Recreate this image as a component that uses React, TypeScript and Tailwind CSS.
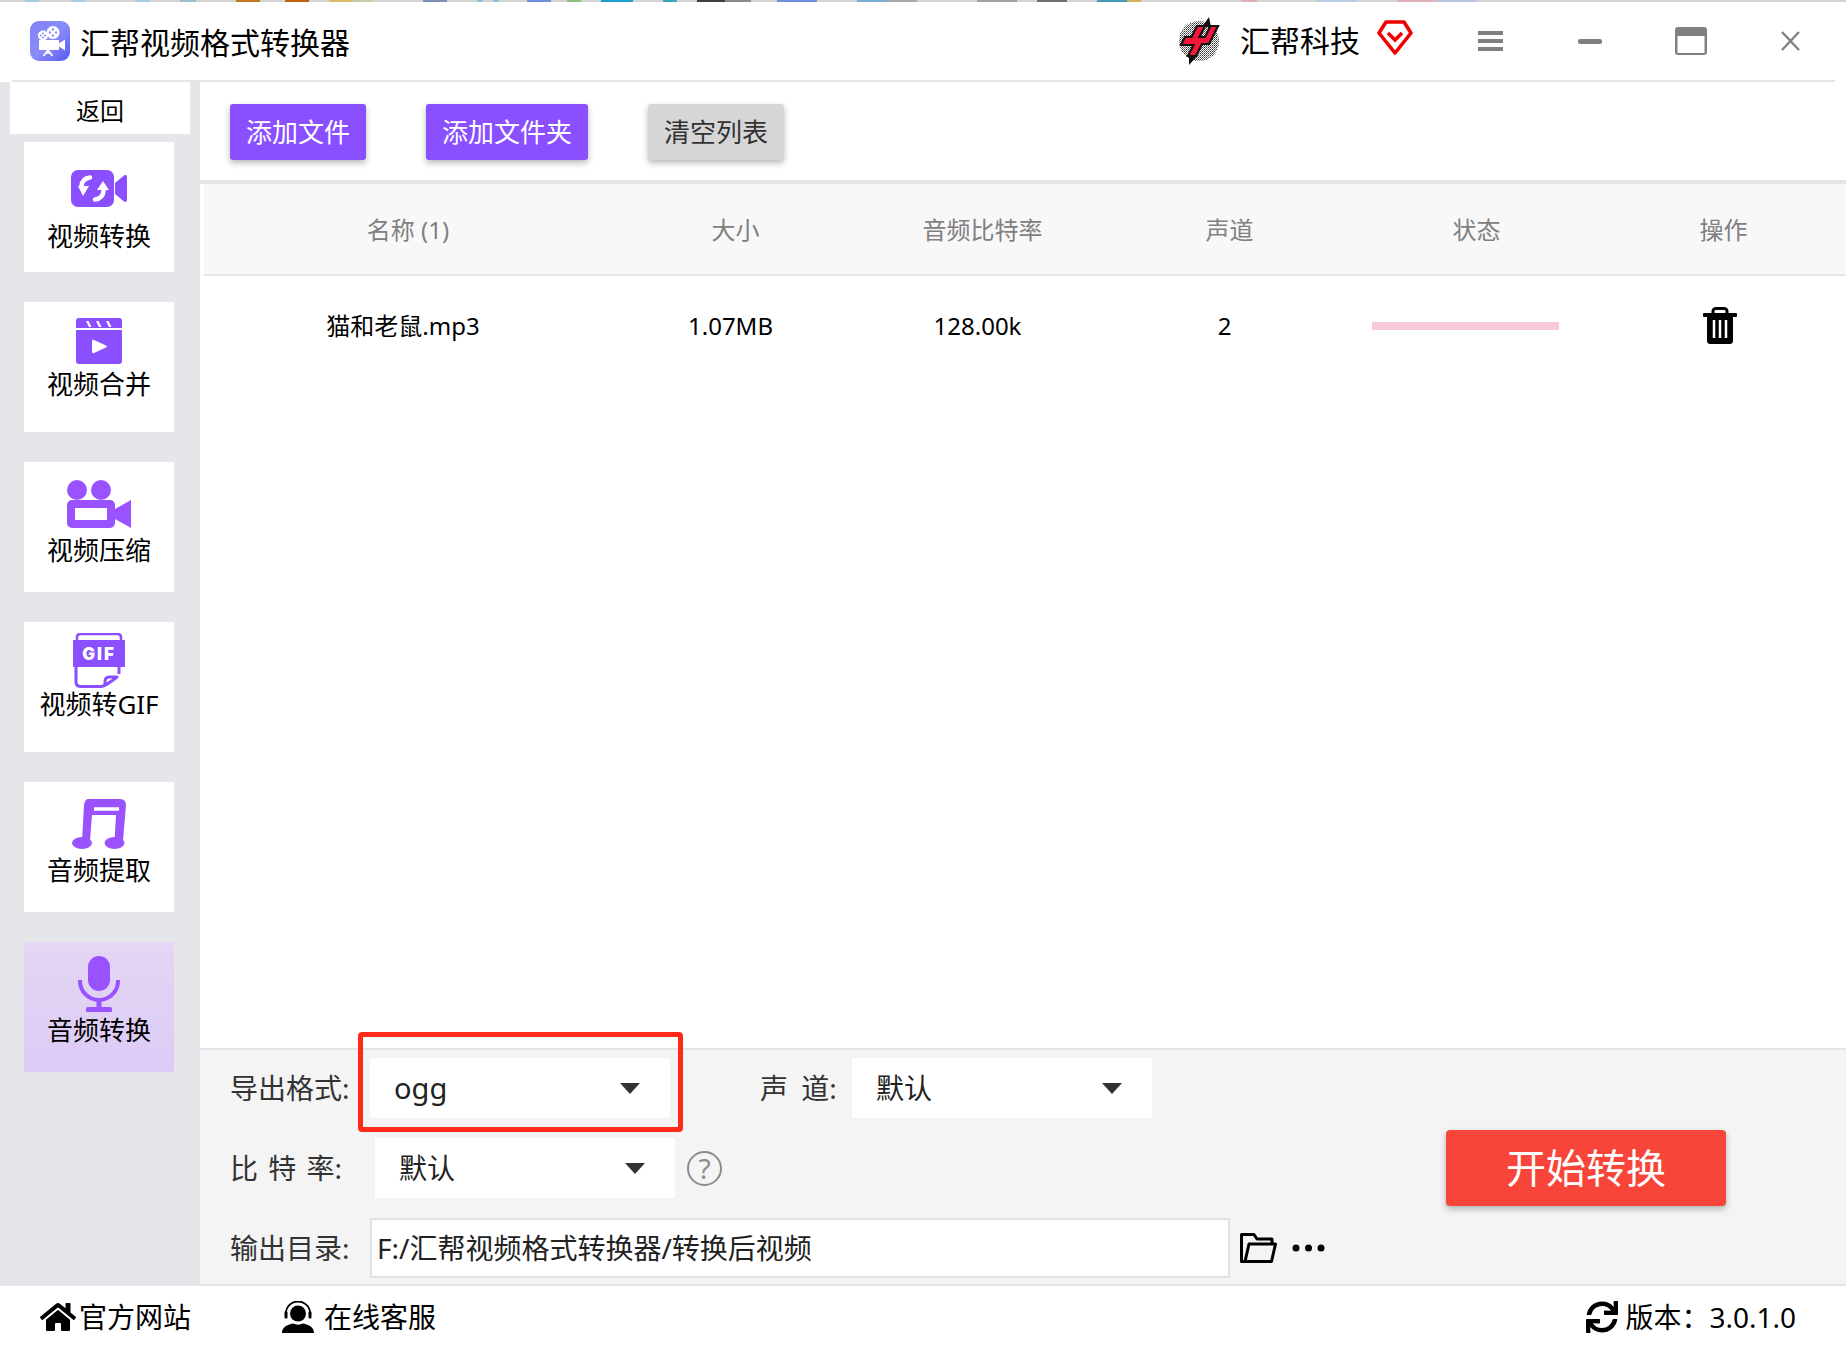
import { FaHome, FaSync } from 'react-icons/fa';

const FONT = "font-['Noto_Sans','Noto_Sans_CJK_SC',sans-serif]";

// desktop showing through the top edge of the window
const strip: [string, string][] = [
  ['w-[25px]', 'bg-[#d4d4d4]'], ['w-[14px]', 'bg-[#a8cbe0]'], ['w-[32px]', 'bg-[#d4d4d4]'], ['w-[14px]', 'bg-[#a8cbe0]'],
  ['w-[50px]', 'bg-[#d4d4d4]'], ['w-[15px]', 'bg-[#a8cbe0]'], ['w-[30px]', 'bg-[#d4d4d4]'], ['w-[16px]', 'bg-[#9dbdd0]'],
  ['w-[40px]', 'bg-[#d4d4d4]'], ['w-[24px]', 'bg-[#c27a20]'], ['w-[25px]', 'bg-[#d4d4d4]'], ['w-[24px]', 'bg-[#c4600c]'],
  ['w-[20px]', 'bg-[#d4d4d4]'], ['w-[24px]', 'bg-[#dcbb68]'], ['w-[20px]', 'bg-[#c9cca8]'], ['w-[50px]', 'bg-[#d4d4d4]'],
  ['w-[24px]', 'bg-[#7d8fb5]'], ['w-[30px]', 'bg-[#d4d4d4]'], ['w-[6px]', 'bg-[#8fc0d8]'], ['w-[10px]', 'bg-[#d4d4d4]'],
  ['w-[6px]', 'bg-[#8fc0d8]'], ['w-[28px]', 'bg-[#d4d4d4]'], ['w-[24px]', 'bg-[#6f90dc]'], ['w-[16px]', 'bg-[#d4d4d4]'],
  ['w-[14px]', 'bg-[#8ebc7c]'], ['w-[20px]', 'bg-[#d4d4d4]'], ['w-[32px]', 'bg-[#20a0d0]'], ['w-[30px]', 'bg-[#d4d4d4]'],
  ['w-[14px]', 'bg-[#38a8c0]'], ['w-[20px]', 'bg-[#d4d4d4]'], ['w-[28px]', 'bg-[#404040]'], ['w-[26px]', 'bg-[#8a8a8a]'],
  ['w-[26px]', 'bg-[#d4d4d4]'], ['w-[40px]', 'bg-[#6f90dc]'], ['w-[40px]', 'bg-[#d4d4d4]'], ['w-[30px]', 'bg-[#7ab0d8]'],
  ['w-[30px]', 'bg-[#a8a8a8]'], ['w-[60px]', 'bg-[#d4d4d4]'], ['w-[40px]', 'bg-[#a0a0a0]'], ['w-[20px]', 'bg-[#d4d4d4]'],
  ['w-[30px]', 'bg-[#707070]'], ['w-[30px]', 'bg-[#d4d4d4]'], ['w-[30px]', 'bg-[#4898b8]'], ['w-[14px]', 'bg-[#d4b060]'],
  ['w-[100px]', 'bg-[#d4d4d4]'], ['w-[16px]', 'bg-[#e0b0b0]'], ['w-[60px]', 'bg-[#d4d4d4]'], ['w-[40px]', 'bg-[#b8cce4]'],
  ['w-[40px]', 'bg-[#d4d4d4]'], ['w-[40px]', 'bg-[#e0b0b8]'], ['w-[40px]', 'bg-[#b8c4e0]'], ['flex-1', 'bg-[#d4d4d4]'],
];

const AppLogo = () => (
  <svg width="40" height="40" viewBox="0 0 40 40">
    <defs>
      <linearGradient id="lg" x1="0" y1="0" x2="1" y2="1">
        <stop offset="0" stopColor="#7f82f8" />
        <stop offset="0.5" stopColor="#8b8cfa" />
        <stop offset="1" stopColor="#5458f0" />
      </linearGradient>
    </defs>
    <rect width="40" height="40" rx="9" fill="url(#lg)" />
    <circle cx="13" cy="14.5" r="5" fill="#fff" />
    <circle cx="23" cy="11.5" r="6.5" fill="#fff" />
    <g fill="#8b8cfa">
      <circle cx="23" cy="8.5" r="1.2" /><circle cx="20" cy="11.5" r="1.2" /><circle cx="26" cy="11.5" r="1.2" /><circle cx="23" cy="14.5" r="1.2" />
      <circle cx="13" cy="12.5" r="1" /><circle cx="10.8" cy="14.5" r="1" /><circle cx="15.2" cy="14.5" r="1" /><circle cx="13" cy="16.5" r="1" />
    </g>
    <rect x="9" y="19" width="20" height="10" rx="1" fill="#fff" />
    <path d="M29 22.5 35 18.5V29.5L29 25.5Z" fill="#fff" />
    <path d="M18 29 13.5 35M18 29 22.5 35M18 29V33" stroke="#fff" strokeWidth="1.8" fill="none" />
  </svg>
);

const BrandLogo = () => (
  <svg width="42" height="48" viewBox="0 0 42 48">
    <defs>
      <pattern id="dots" width="2" height="2" patternUnits="userSpaceOnUse">
        <rect width="1" height="1" fill="#333" />
        <rect x="1" y="1" width="1" height="1" fill="#777" />
      </pattern>
    </defs>
    <circle cx="21" cy="24" r="20" fill="url(#dots)" />
    <path d="M24 10 31 0 33 10ZM11 38 11 48 20 38Z" fill="#111" />
    <path
      d="M19 9H27L21.500 20H27L32.500 9H40L31 27H24L18 39H10L15.500 28H3L7 20H13.500Z"
      fill="#f5163a"
      stroke="#111"
      strokeWidth="2.2"
    />
  </svg>
);

const BadgeIcon = () => (
  <svg width="36" height="35" viewBox="0 0 36 35" fill="none">
    <path d="M9 2H27L34 13 18 33 2 13Z" stroke="#f00000" strokeWidth="3.6" strokeLinejoin="round" />
    <path d="M11 13 18 20 25 13" stroke="#f00000" strokeWidth="3.6" />
  </svg>
);

const TitleButtons = () => (
  <div className="flex items-center">
    <svg className="ml-[65px]" width="25" height="20" viewBox="0 0 25 20" fill="#808080">
      <rect width="25" height="4" /><rect y="8" width="25" height="4" /><rect y="16" width="25" height="4" />
    </svg>
    <svg className="ml-[75px]" width="24" height="5" viewBox="0 0 24 5" fill="#808080">
      <rect width="24" height="5" rx="2" />
    </svg>
    <svg className="ml-[73px]" width="32" height="28" viewBox="0 0 32 28">
      <rect width="32" height="28" rx="3" fill="#808080" />
      <rect x="2.5" y="9" width="27" height="17" fill="#fff" />
    </svg>
    <svg className="ml-[74px]" width="19" height="20" viewBox="0 0 19 20" stroke="#808080" strokeWidth="2.4">
      <path d="M1 1 18 19M18 1 1 19" />
    </svg>
  </div>
);

const ConvertIcon = () => (
  <svg width="56" height="37" viewBox="0 0 56 37">
    <rect width="43" height="37" rx="7" fill="#8a4fff" />
    <path d="M44 13 53 5.5C54.5 4.5 56 5 56 7V30C56 32 54.5 32.5 53 31.500L44 24Z" fill="#8a4fff" />
    <path d="M19 7.500C14 8 11 11 10.500 16" stroke="#fff" strokeWidth="4.500" fill="none" strokeLinecap="round" />
    <path d="M7 16H18L12 26Z" fill="#fff" />
    <path d="M24 29.500C29 29 32.500 25.500 32.500 20" stroke="#fff" strokeWidth="4.500" fill="none" strokeLinecap="round" />
    <path d="M26 20H38L32 11Z" fill="#fff" />
  </svg>
);

const MergeIcon = () => (
  <svg width="46" height="46" viewBox="0 0 46 46" fill="#8a4fff">
    <path d="M3 0H43A3 3 0 0 1 46 3V10H0V3A3 3 0 0 1 3 0Z" />
    <path d="M0 12H46V43A3 3 0 0 1 43 46H3A3 3 0 0 1 0 43Z" />
    <path d="M10 3 13 9H15.500L12.500 3ZM20 3 23 9H25.500L22.500 3ZM30 3 33 9H35.500L32.500 3Z" fill="#fff" />
    <path d="M16 23C16 22 17 21.500 18 22L30 27.500C31 28 31 29 30 29.500L18 35C17 35.500 16 35 16 34Z" fill="#fff" />
  </svg>
);

const CompressIcon = () => (
  <svg width="64" height="48" viewBox="0 0 64 48" fill="#9a52ff">
    <circle cx="10" cy="10" r="10" />
    <circle cx="34" cy="10" r="10" />
    <path d="M5 20H43A5 5 0 0 1 48 25V43A5 5 0 0 1 43 48H5A5 5 0 0 1 0 43V25A5 5 0 0 1 5 20ZM8 28V40H40V28Z" fillRule="evenodd" />
    <path d="M48 29 64 20V48L48 39Z" />
  </svg>
);

const GifIcon = () => (
  <svg className="-mb-[2px]" width="52" height="55" viewBox="0 0 52 55" fill="none">
    <path d="M4 9V4C4 2 6 1 8 1H44C46 1 48 2 48 4V9" stroke="#8a4fff" strokeWidth="2.500" />
    <rect y="7" width="52" height="27" rx="1" fill="#8a4fff" />
    <path d="M3 33V49C3 52 5 53.500 8 53.500H28C32 53.500 44 44 44 44H36C33 44 32 46 32 49V53" stroke="#8a4fff" strokeWidth="3" strokeLinejoin="round" />
    <path d="M46 34V41" stroke="#8a4fff" strokeWidth="3" />
    <text x="26" y="27" textAnchor="middle" fill="#fff" fontSize="17" fontWeight="900" fontFamily="Inter,sans-serif" letterSpacing="2">GIF</text>
  </svg>
);

const MusicIcon = () => (
  <svg width="54" height="50" viewBox="0 0 54 50" fill="#9a52ff">
    <path d="M16 0H48Q54 0 54 6L51 42H42.500L44 16H20L18 42H10L12 6Q13 0 16 0ZM22 8.300V11.700H47V8.300Z" fillRule="evenodd" />
    <ellipse cx="10" cy="44" rx="10" ry="6" />
    <ellipse cx="42.500" cy="44" rx="10" ry="6" />
  </svg>
);

const MicIcon = () => (
  <svg width="42" height="56" viewBox="0 0 42 56" fill="none">
    <rect x="10" width="22" height="35" rx="11" fill="#9a52ff" />
    <path d="M2 24V25A19 19 0 0 0 40 25V24" stroke="#9a52ff" strokeWidth="4" />
    <rect x="18.500" y="44" width="5" height="9" fill="#9a52ff" />
    <rect x="8" y="51" width="26" height="5" rx="1.500" fill="#9a52ff" />
  </svg>
);

const TrashIcon = () => (
  <svg width="36" height="38" viewBox="0 0 36 38" fill="none">
    <path d="M11 6V4C11 2.500 12.500 1.500 14 1.500H22C23.500 1.500 25 2.500 25 4V6" stroke="#000" strokeWidth="3" />
    <rect x="1" y="6" width="34" height="4" rx="1" fill="#000" />
    <path d="M5 10H31V34C31 36 29.500 37 28 37H8C6.500 37 5 36 5 34Z" fill="#000" />
    <path d="M12 13V31M18 13V31M24 13V31" stroke="#fff" strokeWidth="2.500" />
  </svg>
);

const Caret = () => (
  <svg width="20" height="11" viewBox="0 0 20 11">
    <path d="M0 0H20L10 11Z" fill="#333" />
  </svg>
);

const HeadsetIcon = () => (
  <svg width="32" height="32" viewBox="0 0 32 32">
    <circle cx="16" cy="12.500" r="8" fill="#000" />
    <path d="M4 14V12A12 11.500 0 0 1 28 12V14" stroke="#000" strokeWidth="1.800" fill="none" />
    <rect x="2.500" y="10.500" width="3" height="7" rx="1" fill="#000" />
    <rect x="26.500" y="10.500" width="3" height="7" rx="1" fill="#000" />
    <path d="M0 32C0 26 5 24 11 22.500 14 24 18 24 21 22.500 27 24 32 26 32 32Z" fill="#000" />
  </svg>
);

const FolderIcon = () => (
  <svg width="37" height="30" viewBox="0 0 37 30" fill="none" stroke="#000" strokeWidth="3" strokeLinejoin="round">
    <path d="M5 28.500H1.500V1.500H14L17 6H32V11" />
    <path d="M9 11H35.500L31.500 28.500H5Z" />
  </svg>
);

const navItems = [
  { label: '视频转换', icon: <ConvertIcon />, box: 'pt-[28px] gap-[11px]' },
  { label: '视频合并', icon: <MergeIcon />, box: 'pt-[16px] gap-[2px]' },
  { label: '视频压缩', icon: <CompressIcon />, box: 'pt-[18px] gap-[4px]' },
  { label: '视频转GIF', icon: <GifIcon />, box: 'pt-[11px] gap-[0px]' },
  { label: '音频提取', icon: <MusicIcon />, box: 'pt-[17px] gap-[3px]' },
  { label: '音频转换', icon: <MicIcon />, box: 'pt-[14px] gap-[0px]', active: true },
];

const columns = ['名称 (1)', '大小', '音频比特率', '声道', '状态', '操作'];

const Select = ({ value, big }: { value: string; big?: boolean }) => (
  <div className="w-[300px] h-[60px] bg-white flex items-center justify-between pl-[24px] pr-[30px]">
    <span className={big ? 'text-[29px] text-[#222]' : 'text-[28px] text-[#222]'}>{value}</span>
    <Caret />
  </div>
);

export default function App() {
  return (
    <div className={`w-full h-screen overflow-hidden flex flex-col bg-white text-black ${FONT}`}>
      <div className="h-[2px] flex shrink-0">
        {strip.map(([w, c], i) => (
          <span key={i} className={`${w} ${c}`} />
        ))}
      </div>

      {/* Title bar */}
      <div className="h-[78px] shrink-0 flex items-center pl-[30px]">
        <AppLogo />
        <span className="ml-[10px] mt-[3px] text-[30px] leading-none">汇帮视频格式转换器</span>
        <div className="ml-auto mr-[46px] flex items-center">
          <BrandLogo />
          <span className="ml-[20px] text-[30px] leading-none">汇帮科技</span>
          <span className="ml-[17px] -mt-[8px]"><BadgeIcon /></span>
          <TitleButtons />
        </div>
      </div>
      <div className="h-[2px] shrink-0 ml-[12px] mr-[11px] bg-[#e5e5e5]" />

      <div className="flex-1 min-h-0 flex">
        {/* Sidebar */}
        <div className="w-[200px] shrink-0 bg-[#e4e6ea] flex flex-col">
          <div className="ml-[10px] w-[180px] h-[52px] shrink-0 pt-[6px] bg-white flex items-center justify-center text-[24px]">返回</div>
          <div className="mt-[8px] ml-[24px] w-[150px] flex flex-col gap-[30px]">
            {navItems.map((item) => (
              <div
                key={item.label}
                className={`h-[130px] flex flex-col items-center ${item.box} ${
                  item.active ? 'bg-gradient-to-b from-[#e4d6f4] to-[#dccbf6]' : 'bg-white'
                }`}
              >
                {item.icon}
                <span className="text-[26px] leading-[36px] whitespace-nowrap">{item.label}</span>
              </div>
            ))}
          </div>
        </div>

        {/* Main */}
        <div className="flex-1 min-w-0 flex flex-col">
          <div className="h-[98px] shrink-0 flex items-start pt-[22px] pl-[30px] text-[26px]">
            <button className="w-[136px] h-[56px] rounded-[3px] bg-[#8a4fff] text-white shadow-[0_3px_6px_rgba(0,0,0,0.28)]">添加文件</button>
            <button className="ml-[60px] w-[162px] h-[56px] rounded-[3px] bg-[#8a4fff] text-white shadow-[0_3px_6px_rgba(0,0,0,0.28)]">添加文件夹</button>
            <button className="ml-[60px] w-[136px] h-[56px] rounded-[3px] bg-[#d6d6d6] text-[#333] shadow-[0_3px_6px_rgba(0,0,0,0.28)]">清空列表</button>
          </div>
          <div className="h-[4px] shrink-0 bg-[#e5e5e5]" />

          {/* Table */}
          <div className="flex-1 min-h-0 pl-[4px]">
            <div className="grid grid-cols-[408px_repeat(5,247px)] h-[92px] pt-[2px] items-center bg-[#f8f8f8] border-b-2 border-[#e5e5e5] text-[24px] text-[#808080] text-center">
              {columns.map((c) => (
                <span key={c}>{c}</span>
              ))}
            </div>
            <div className="grid grid-cols-[408px_repeat(5,247px)] h-[100px] items-center text-[24px] text-center">
              <span className="pr-[10px]">猫和老鼠.mp3</span>
              <span className="pr-[10px]">1.07MB</span>
              <span className="pr-[10px]">128.00k</span>
              <span className="pr-[10px]">2</span>
              <div className="flex justify-start pl-[19px]">
                <div className="w-[187px] h-[8px] bg-[#f9c8da]" />
              </div>
              <div className="flex justify-center pr-[8px]"><TrashIcon /></div>
            </div>
          </div>

          {/* Settings */}
          <div className="h-[238px] shrink-0 bg-[#f4f4f4] border-y-2 border-[#e4e4e8] text-[28px] text-[#333]">
            <div className="mt-[8px] h-[60px] flex items-center pl-[30px]">
              <span className="w-[140px]">导出格式:</span>
              <div className="relative">
                <Select value="ogg" big />
                <div className="absolute -left-[12px] -right-[13px] -top-[26px] -bottom-[14px] rounded-[4px] border-[5px] border-[#ff2a1a]" />
              </div>
              <span className="ml-[90px] w-[92px] [word-spacing:6px]">声 道:</span>
              <Select value="默认" />
            </div>
            <div className="mt-[20px] h-[60px] flex items-center pl-[30px]">
              <span className="w-[145px] [word-spacing:3px]">比 特 率:</span>
              <Select value="默认" />
              <span className="ml-[12px] w-[35px] h-[35px] rounded-full border-2 border-[#8c8c8c] flex items-center justify-center text-[28px] leading-none text-[#8c8c8c]">?</span>
              <button className="ml-auto mr-[120px] -my-[8px] w-[280px] h-[76px] rounded-[4px] bg-[#f7453a] text-white text-[40px] shadow-[0_3px_6px_rgba(0,0,0,0.28)]">开始转换</button>
            </div>
            <div className="mt-[20px] h-[60px] flex items-center pl-[30px]">
              <span className="w-[140px]">输出目录:</span>
              <div className="w-[860px] h-[60px] bg-white border-2 border-[#e0e0e8] flex items-center pl-[5px] text-[28px] text-[#222]">F:/汇帮视频格式转换器/转换后视频</div>
              <span className="ml-[10px]"><FolderIcon /></span>
              <svg className="ml-[15px]" width="33" height="8" viewBox="0 0 33 8" fill="#000">
                <circle cx="4" cy="4" r="3.500" /><circle cx="16.500" cy="4" r="3.500" /><circle cx="29" cy="4" r="3.500" />
              </svg>
            </div>
          </div>
        </div>
      </div>

      {/* Footer */}
      <div className="h-[66px] shrink-0 flex items-center text-[28px] pb-[4px] pl-[40px] pr-[50px]">
        <FaHome size={36} />
        <span className="ml-[3px]">官方网站</span>
        <span className="ml-[91px]"><HeadsetIcon /></span>
        <span className="ml-[10px]">在线客服</span>
        <FaSync size={32} className="ml-auto" />
        <span className="ml-[7px]">版本：3.0.1.0</span>
      </div>
    </div>
  );
}
